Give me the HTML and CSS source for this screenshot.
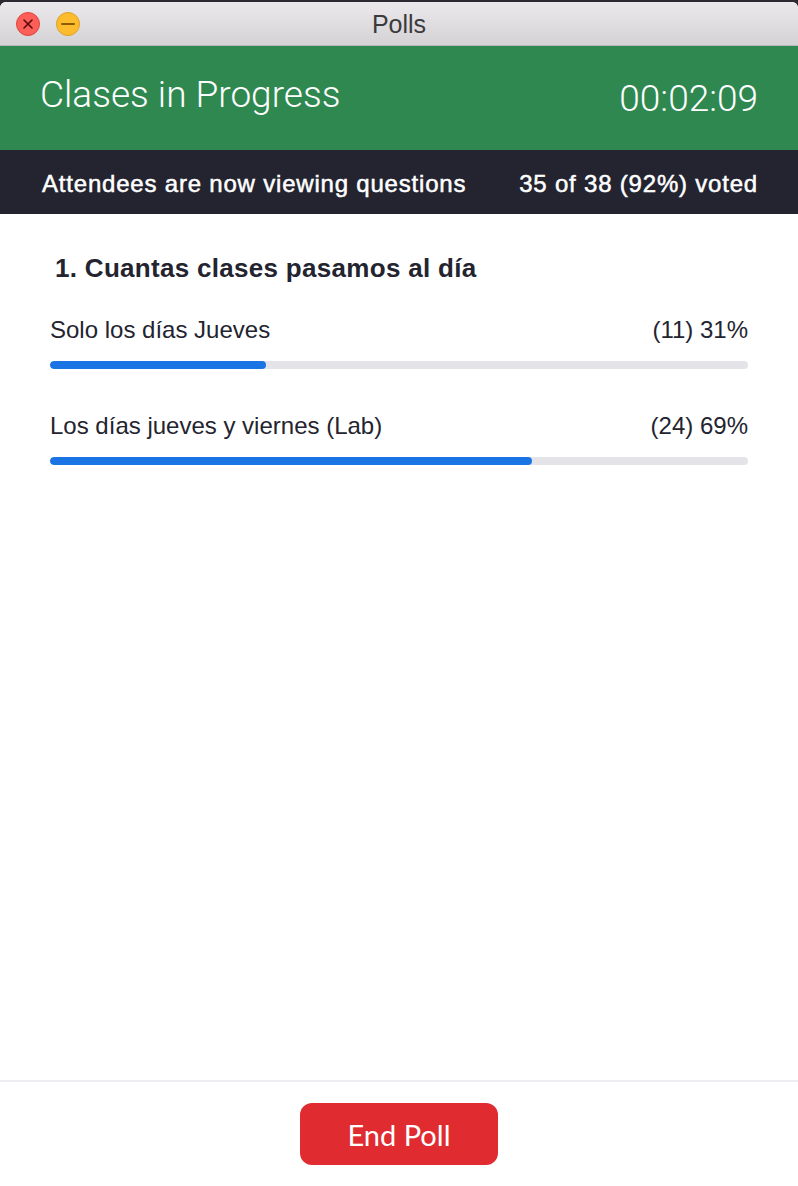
FILE: index.html
```html
<!DOCTYPE html>
<html>
<head>
<meta charset="utf-8">
<link rel="stylesheet" href="styles.css">
</head>
<body>
<div class="window">
  <div class="titlebar">
    <div class="lights">
      <span class="light close">
        <svg width="12" height="12" viewBox="0 0 12 12"><path d="M2 2 L10 10 M10 2 L2 10" stroke="#5a0a08" stroke-width="1.6" stroke-linecap="round"/></svg>
      </span>
      <span class="light min">
        <svg width="14" height="4" viewBox="0 0 14 4"><path d="M1 2 H13" stroke="#8f5a05" stroke-width="2" stroke-linecap="round"/></svg>
      </span>
    </div>
    <div class="title">Polls</div>
  </div>
  <div class="header">
    <div class="poll-name">Clases in Progress</div>
    <div class="timer">00:02:09</div>
  </div>
  <div class="status">
    <div>Attendees are now viewing questions</div>
    <div>35 of 38 (92%) voted</div>
  </div>
  <div class="content">
    <div class="question">1. Cuantas clases pasamos al día</div>
    <div class="option">
      <div class="option-row">
        <span>Solo los días Jueves</span>
        <span>(11) 31%</span>
      </div>
      <div class="track"><div class="fill" style="width:31%"></div></div>
    </div>
    <div class="option">
      <div class="option-row">
        <span>Los días jueves y viernes (Lab)</span>
        <span>(24) 69%</span>
      </div>
      <div class="track"><div class="fill" style="width:69%"></div></div>
    </div>
  </div>
  <div class="footer">
    <button class="end">End Poll</button>
  </div>
</div>
</body>
</html>
```
FILE: styles.css
```css
* { box-sizing: border-box; }
html, body { margin: 0; padding: 0; }
body {
  background: #2b2b31;
  width: 798px;
  height: 1186px;
  overflow: hidden;
  font-family: "Liberation Sans", Arial, sans-serif;
}
.window {
  margin-top: 2px;
  height: 1184px;
  background: #ffffff;
  border-radius: 6px 6px 0 0;
  overflow: hidden;
  display: flex;
  flex-direction: column;
}
.titlebar {
  height: 44px;
  flex: none;
  position: relative;
  background: linear-gradient(#ebe9eb, #d4d2d4);
  border-bottom: 1px solid #b9b7b9;
  display: flex;
  align-items: center;
  justify-content: center;
}
.lights {
  position: absolute;
  left: 16px;
  top: 10px;
  display: flex;
  gap: 16px;
}
.light {
  width: 24px;
  height: 24px;
  border-radius: 50%;
  display: flex;
  align-items: center;
  justify-content: center;
}
.close { background: #fc5f57; border: 1px solid #de4640; }
.min { background: #fdbc2e; border: 1px solid #dea123; }
.title {
  font-size: 25px;
  color: #3b3a3d;
  padding-top: 2px;
}
.header {
  height: 104px;
  flex: none;
  background: #2e8850;
  color: #ffffff;
  display: flex;
  justify-content: space-between;
  align-items: center;
  padding: 0 40px;
  font-family: Roboto, "Liberation Sans", sans-serif;
  font-weight: 300;
  font-size: 37px;
}
.poll-name { padding-bottom: 8px; }
.timer { padding-top: 0; }
.status {
  height: 64px;
  flex: none;
  background: #23242f;
  color: #ffffff;
  display: flex;
  justify-content: space-between;
  align-items: center;
  padding: 4px 40px 0 42px;
  font-size: 24px;
  letter-spacing: 0.8px;
  -webkit-text-stroke: 0.5px #ffffff;
}
.content {
  flex: 1;
  padding: 39px 50px 0 50px;
  color: #23242f;
}
.question {
  font-size: 26px;
  line-height: 30px;
  font-weight: bold;
  letter-spacing: 0.3px;
  padding-left: 5px;
  margin-bottom: 33px;
}
.option { margin-bottom: 43px; }
.option-row {
  display: flex;
  justify-content: space-between;
  font-size: 24px;
  line-height: 28px;
  margin-bottom: 17px;
}
.track {
  height: 8px;
  border-radius: 4px;
  background: #e3e3e8;
  overflow: hidden;
}
.fill {
  height: 100%;
  border-radius: 4px;
  background: #1b74e4;
}
.footer {
  height: 106px;
  flex: none;
  border-top: 2px solid #eeeef2;
  display: flex;
  justify-content: center;
  padding-top: 21px;
}
.end {
  width: 198px;
  height: 62px;
  border: none;
  border-radius: 12px;
  background: #e02b31;
  color: #ffffff;
  font-family: Lato, "Liberation Sans", sans-serif;
  font-size: 29px;
  padding: 0;
}
```
